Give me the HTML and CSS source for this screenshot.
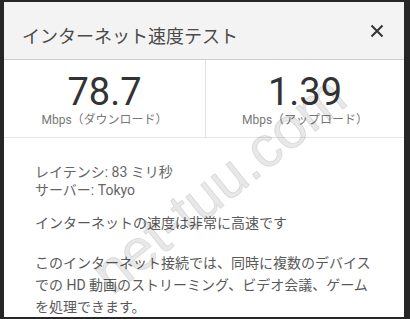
FILE: index.html
```html
<!DOCTYPE html>
<html lang="ja">
<head>
<meta charset="utf-8">
<title>インターネット速度テスト</title>
<link rel="stylesheet" href="styles.css">
</head>
<body>
<div class="dialog">
  <div class="header">
    <div class="title">インターネット速度テスト</div>
    <svg class="close" width="14" height="14" viewBox="0 0 14 14" aria-label="閉じる">
      <path d="M1.5 1.5 L12.5 12.5 M12.5 1.5 L1.5 12.5" stroke="#333" stroke-width="2" fill="none"/>
    </svg>
  </div>
  <div class="stats">
    <div class="stat">
      <div class="value">78.7</div>
      <div class="unit">Mbps（ダウンロード）</div>
    </div>
    <div class="stat">
      <div class="value">1.39</div>
      <div class="unit">Mbps（アップロード）</div>
    </div>
  </div>
  <div class="details">
    <div class="meta">
      <div>レイテンシ: 83 ミリ秒</div>
      <div>サーバー: Tokyo</div>
    </div>
    <p class="verdict">インターネットの速度は非常に高速です</p>
    <p class="desc">このインターネット接続では、同時に複数のデバイスでの HD 動画のストリーミング、ビデオ会議、ゲームを処理できます。</p>
  </div>
  <div class="watermark">net-tuu.com</div>
</div>
</body>
</html>
```

FILE: styles.css
```css
html, body {
  margin: 0;
  padding: 0;
}
body {
  background: #262626;
  width: 410px;
  height: 319px;
  overflow: hidden;
  font-family: Roboto, "Noto Sans CJK JP", sans-serif;
}
.dialog {
  position: relative;
  margin: 2px 6px 0 4px;
  width: 400px;
  height: 315px;
  background: #fff;
  overflow: hidden;
}
.header {
  background: #f3f3f3;
  border-bottom: 1px solid #cccccc;
  display: flex;
  align-items: center;
  justify-content: space-between;
  padding: 8px 20px 0 18px;
  box-sizing: border-box;
  height: 58px;
}
.title {
  font-family: "Noto Sans CJK JP", sans-serif;
  font-size: 18px;
  color: #4a4a4a;
}
.close {
  display: block;
  margin-bottom: 8px;
}
.stats {
  display: grid;
  grid-template-columns: 201px 1fr;
  border-bottom: 1px solid #e6e6e6;
  height: 78px;
  box-sizing: border-box;
}
.stat {
  display: flex;
  flex-direction: column;
  align-items: center;
  padding-top: 13px;
}
.stat + .stat {
  border-left: 1px solid #e3e3e3;
}
.value {
  font-family: Roboto, sans-serif;
  font-size: 38px;
  line-height: 38px;
  color: #333;
}
.unit {
  font-size: 12px;
  line-height: 16px;
  color: #777;
  margin-top: 1px;
}
.details {
  padding: 25px 30px 0 31px;
  color: #5a5a5a;
  font-size: 14px;
}
.meta {
  line-height: 18px;
  color: #666;
}
.verdict {
  margin: 13px 0 0;
  line-height: 22px;
}
.desc {
  margin: 18px 0 0;
  line-height: 22px;
}
.watermark {
  position: absolute;
  left: 214px;
  top: 182px;
  transform: translate(-50%, -50%) rotate(-39deg);
  font-family: "Liberation Sans", sans-serif;
  font-size: 58px;
  white-space: nowrap;
  color: rgba(0, 0, 0, 0.09);
  -webkit-text-stroke: 1px rgba(0, 0, 0, 0.1);
  pointer-events: none;
}
```
